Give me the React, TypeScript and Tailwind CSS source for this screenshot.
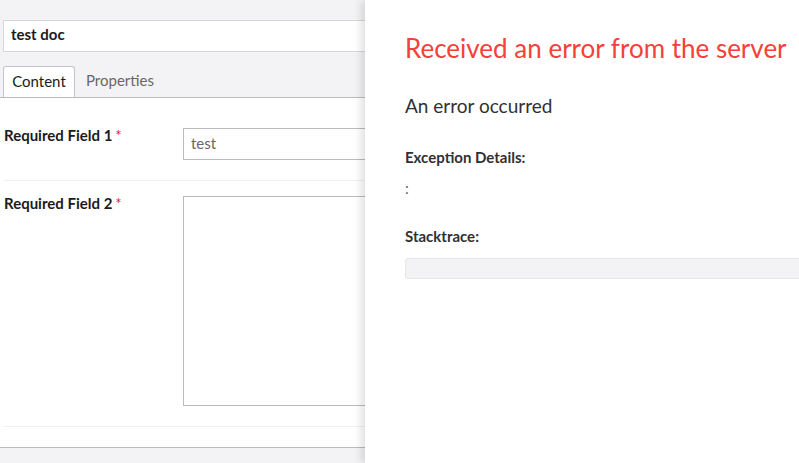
import React from 'react';

const Label: React.FC<{ text: string }> = ({ text }) => (
  <div className="w-[180px] shrink-0 pl-[1px] -mt-[3px] text-[15px] leading-[20px] font-bold text-[#1b1b1d]">
    {text}
    <span className="ml-[3px] text-[#d42054] font-normal">*</span>
  </div>
);

export default function App() {
  return (
    <div
      className="relative w-[799px] h-[463px] overflow-hidden bg-[#f3f3f5]"
      style={{ fontFamily: 'Lato, "Open Sans", sans-serif' }}
    >
      {/* editor behind the overlay */}
      <div className="flex flex-col h-full">
        <div className="pt-[20px] pl-[3px]">
          <div className="h-[32px] w-[420px] border border-[#d8d7d9] bg-white px-[7px] pb-[3px] flex items-center text-[15px] font-bold text-[#1b1b1d]">
            test doc
          </div>
          <div className="mt-[14px] flex items-end h-[31px]">
            <div className="h-[31px] w-[72px] pb-[2px] border border-b-0 border-[#c4c3c8] rounded-t-[3px] bg-white flex items-center justify-center text-[15px] text-[#1b1b1d]">
              Content
            </div>
            <div className="h-[31px] px-[11px] pb-[2px] flex items-center text-[15px] text-[#68676b]">Properties</div>
          </div>
        </div>
        <div className="h-[351px] bg-white border-t border-b border-[#bbbabf] pt-[16px]">
          <div className="ml-[3px] flex pt-[14px] pb-[20px] border-b border-[#f0f0f2]">
            <Label text="Required Field 1" />
            <div className="h-[32px] w-[300px] border border-[#bbbabf] px-[7px] pb-[2px] flex items-center text-[15px] text-[#68676b]">
              test
            </div>
          </div>
          <div className="ml-[3px] flex pt-[15px] pb-[20px] border-b border-[#f0f0f2]">
            <Label text="Required Field 2" />
            <div className="h-[210px] w-[300px] border border-[#bbbabf]" />
          </div>
        </div>
      </div>

      {/* error overlay */}
      <div className="absolute top-0 bottom-0 left-[365px] right-0 bg-white shadow-[-4px_0_8px_rgba(0,0,0,0.12)] pl-[40px] pt-[33px]">
        <div className="text-[26px] leading-[30px] text-[#f5403b] whitespace-nowrap">Received an error from the server</div>
        <div className="mt-[31px] text-[19px] leading-[24px] text-[#303033]">An error occurred</div>
        <div className="mt-[29px] text-[15px] leading-[20px] font-bold text-[#303033]">Exception Details:</div>
        <div className="mt-[11px] text-[15px] leading-[20px] text-[#68676b]">:</div>
        <div className="mt-[28px] text-[15px] leading-[20px] font-bold text-[#303033]">Stacktrace:</div>
        <div className="mt-[12px] h-[21px] w-[420px] rounded-[3px] border border-[#e6e6e8] bg-[#f3f3f5]" />
      </div>
    </div>
  );
}
